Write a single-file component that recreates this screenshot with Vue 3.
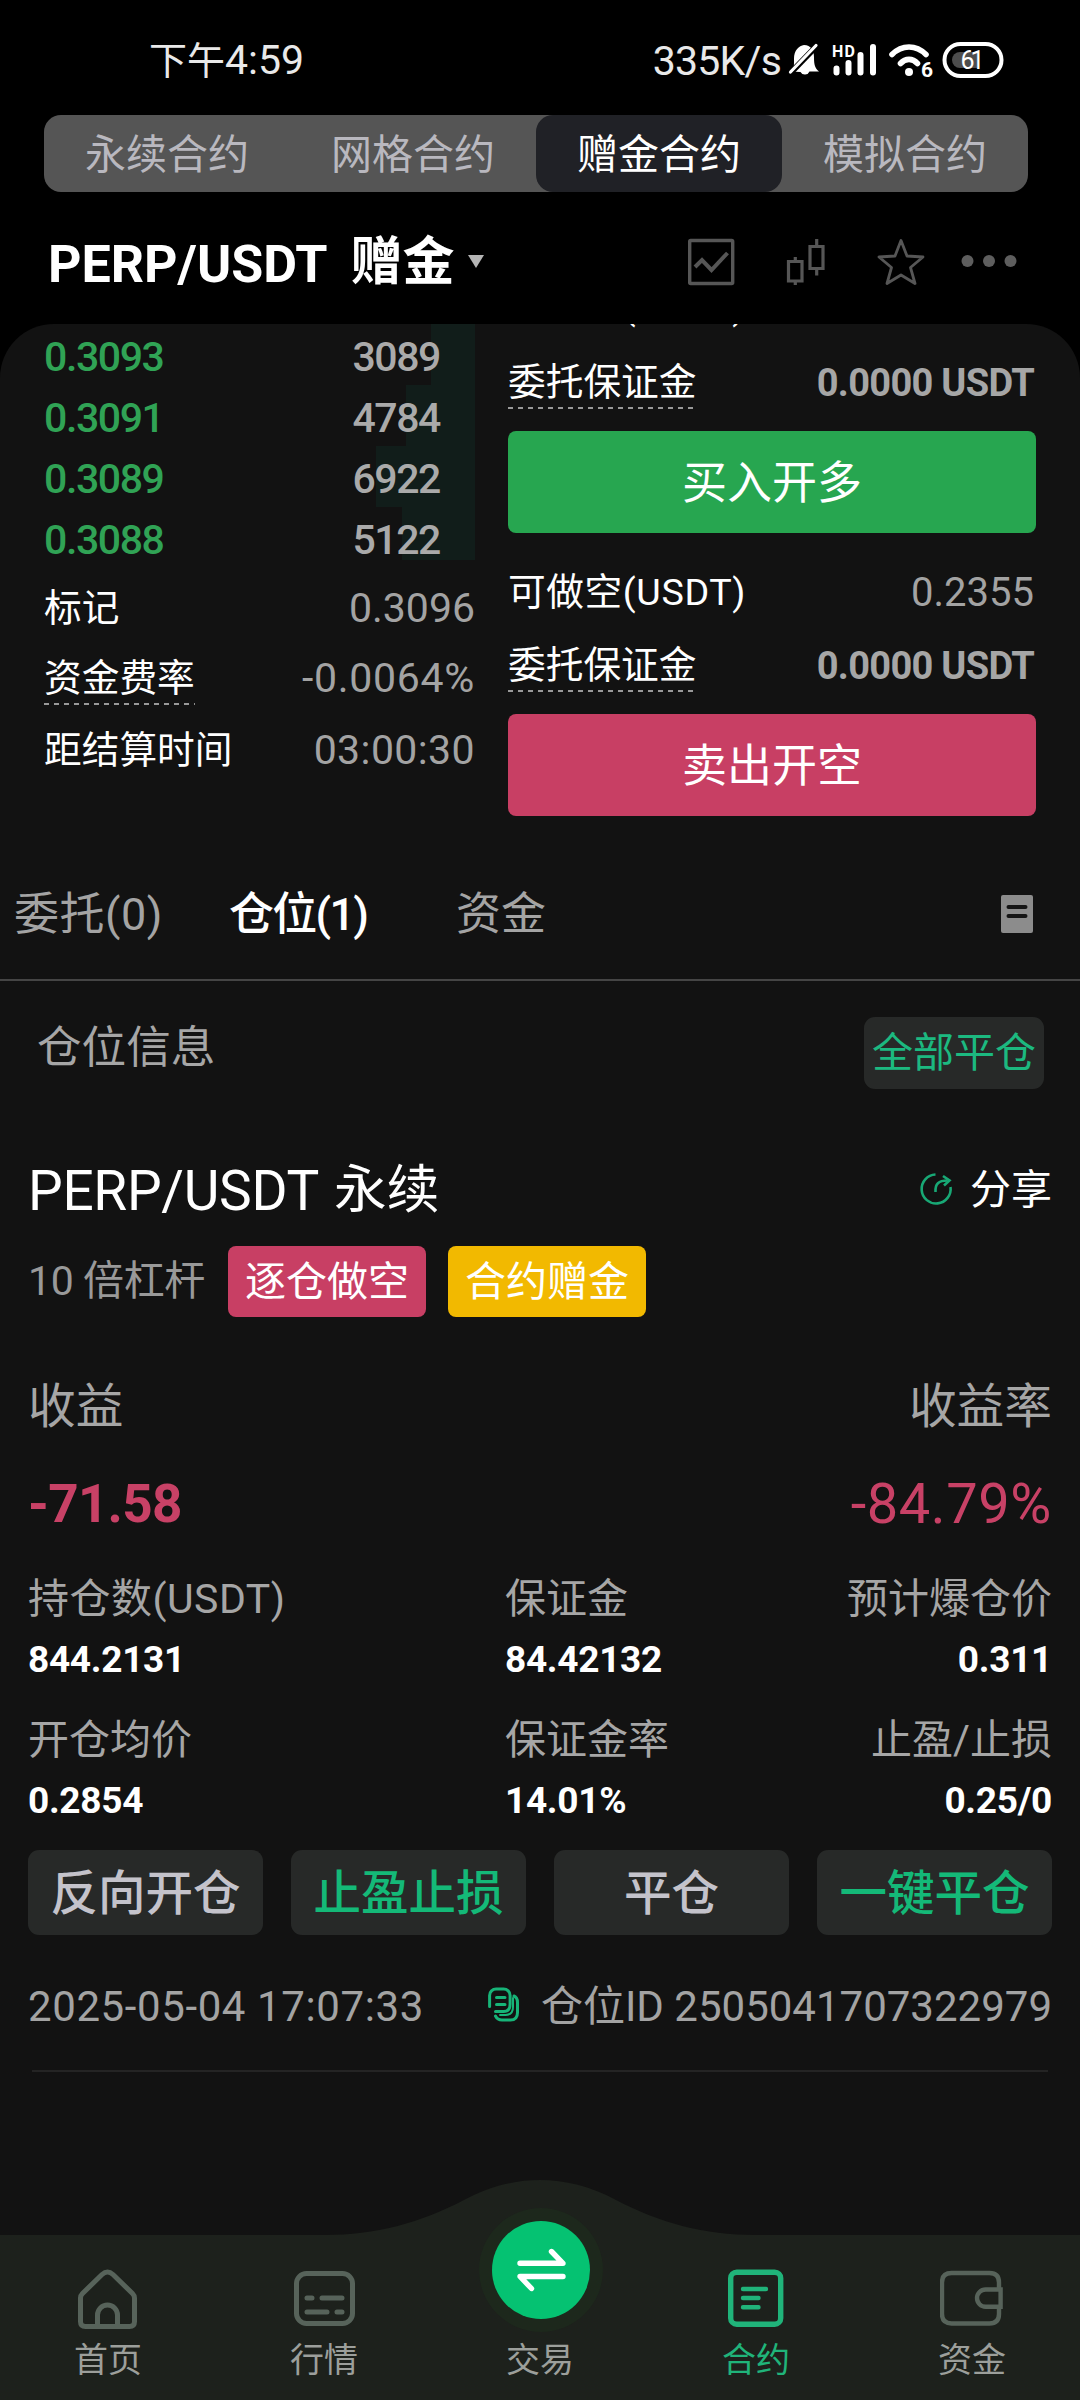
<script setup>
const modes = ['永续合约', '网格合约', '赠金合约', '模拟合约']
const activeMode = '赠金合约'

const bids = [
  { price: '0.3093', qty: '3089', depth: 44 },
  { price: '0.3091', qty: '4784', depth: 69 },
  { price: '0.3089', qty: '6922', depth: 99 },
  { price: '0.3088', qty: '5122', depth: 73 },
]

const orders = [
  { label: '可做多(USDT)', available: '0.2355', margin: '0.0000 USDT', action: '买入开多', side: 'buy' },
  { label: '可做空(USDT)', available: '0.2355', margin: '0.0000 USDT', action: '卖出开空', side: 'sell' },
]

const stats = [
  [
    { label: '持仓数(USDT)', value: '844.2131' },
    { label: '保证金', value: '84.42132' },
    { label: '预计爆仓价', value: '0.311' },
  ],
  [
    { label: '开仓均价', value: '0.2854' },
    { label: '保证金率', value: '14.01%' },
    { label: '止盈/止损', value: '0.25/0' },
  ],
]

const actions = [
  { text: '反向开仓', green: false },
  { text: '止盈止损', green: true },
  { text: '平仓', green: false },
  { text: '一键平仓', green: true },
]
</script>

<template>
  <div class="screen">
    <div class="status">
      <span class="time">下午<b>4:59</b></span>
      <span class="speed">335K/s</span>
      <svg class="sys" width="218" height="40" viewBox="787 40 218 40">
        <path fill="#fff" d="M791 71.500c3.500-3 3-7 3-13 0-8 5-13 10-13.500 7 .5 10 5 10 12 0 8 1 11 5 14.500h-9.500a5 5 0 0 1-9 .5z" />
        <path d="M820 42.500L789.500 74" stroke="#000" stroke-width="6" />
        <path d="M816 45.500L790.500 72" stroke="#fff" stroke-width="3.200" stroke-linecap="round" />
        <text x="832" y="56.500" font-size="16" font-weight="700" fill="#fff" textLength="23">HD</text>
        <g stroke="#fff" stroke-width="6" stroke-linecap="round">
          <path d="M836.500 68.500v4M848.500 63v9.500M860.500 55v17.500M873 47v25.500" />
        </g>
        <g fill="none" stroke="#fff" stroke-width="5.600" stroke-linecap="round">
          <path d="M892 54.500c10-10 24-10 34 0M900.500 63.500c5-5.500 12-5.500 17 0" />
        </g>
        <circle cx="909" cy="72" r="4" fill="#fff" />
        <text x="921" y="76.500" font-size="21" font-weight="700" fill="#fff">6</text>
        <rect x="944.500" y="44" width="57" height="32" rx="16" fill="none" stroke="#fff" stroke-width="4" />
        <path d="M977 52v16h-17a8 8 0 0 1 0-16z" fill="#4d4d4d" />
        <text x="960.500" y="69" font-size="25" font-weight="400" fill="#fff" textLength="24">61</text>
      </svg>
    </div>

    <div class="modes">
      <div v-for="m in modes" :key="m" class="mode" :class="{ on: m === activeMode }">{{ m }}</div>
    </div>

    <header class="head">
      <span class="pair">PERP/USDT</span>
      <span class="kind">赠金</span>
      <i class="caret"></i>
      <svg class="tools" width="340" height="50" viewBox="686 237 340 50" fill="none" stroke="#565656" stroke-width="3.400">
        <rect x="689.700" y="240.500" width="43" height="43" rx="1" />
        <path d="M695 267l7-7 9.500 10 16-17" stroke-width="4" />
        <path d="M788.500 261.500h13.500v19.500h-13.500zM795.300 257v4M795.300 281v4M810 246.500h13v22h-13zM816.700 239v7M816.700 269v6.500" stroke-width="3.200" />
        <path stroke-width="2.800" stroke-linejoin="round" d="M901 240.500l6 15.500 16 1-12.500 10.500 4.500 16-14-8.500-14 8.500 4.500-16L879 257l16-1z" />
        <g fill="#5e5e5e" stroke="none">
          <circle cx="967.500" cy="261" r="6" /><circle cx="989" cy="261" r="6" /><circle cx="1010.500" cy="261" r="6" />
        </g>
      </svg>
    </header>

    <main class="panel">
      <section class="trade">
        <div class="book">
          <div v-for="b in bids" :key="b.price" class="bid">
            <i class="depth" :style="{ width: b.depth + 'px' }"></i>
            <span class="price">{{ b.price }}</span>
            <span class="qty">{{ b.qty }}</span>
          </div>
          <div class="info mark"><span>标记</span><em>0.3096</em></div>
          <div class="info rate"><span class="dash">资金费率</span><em>-0.0064%</em></div>
          <div class="info settle"><span>距结算时间</span><em>03:00:30</em></div>
        </div>
        <div class="order">
          <div v-for="o in orders" :key="o.side" class="group">
            <div class="line avail"><span>{{ o.label }}</span><em>{{ o.available }}</em></div>
            <div class="line margin"><span class="dash">委托保证金</span><strong>{{ o.margin }}</strong></div>
            <div class="submit" :class="o.side">{{ o.action }}</div>
          </div>
        </div>
      </section>

      <nav class="tabs">
        <span class="t1">委托(0)</span>
        <span class="t2">仓位(1)</span>
        <span class="t3">资金</span>
        <svg width="32" height="38" viewBox="0 0 32 38">
          <rect width="32" height="38" rx="2" fill="#8c8c8c" />
          <path d="M7.500 12h17M7.500 21h17" stroke="#151515" stroke-width="4" stroke-linecap="round" />
        </svg>
      </nav>

      <div class="section-head">
        <span>仓位信息</span>
        <div class="close-all">全部平仓</div>
      </div>

      <section class="position">
        <div class="title">
          <span class="sym">PERP/USDT</span>
          <span class="perp">永续</span>
          <svg width="34" height="34" viewBox="0 0 34 34" fill="none" stroke="#18a875" stroke-width="2.600">
            <path d="M16.500 2.500A14.500 14.500 0 1 0 31.500 15" />
            <path d="M16.500 20c-.5-8 3-11.500 12-11.500" />
            <path d="M24 4l6.500 4.500-5.500 5" />
          </svg>
          <span class="share">分享</span>
        </div>
        <div class="badges">
          <span class="lever">10 倍杠杆</span>
          <span class="badge short">逐仓做空</span>
          <span class="badge bonus">合约赠金</span>
        </div>
        <div class="pnl-label"><span>收益</span><span>收益率</span></div>
        <div class="pnl"><b>-71.58</b><span>-84.79%</span></div>
        <div v-for="(row, i) in stats" :key="i" class="stats">
          <div v-for="s in row" :key="s.label" class="stat">
            <div class="k">{{ s.label }}</div>
            <div class="v">{{ s.value }}</div>
          </div>
        </div>
        <div class="actions">
          <div v-for="a in actions" :key="a.text" class="act" :class="{ green: a.green }">{{ a.text }}</div>
        </div>
        <div class="meta">
          <span class="date">2025-05-04 17:07:33</span>
          <svg width="32" height="36" viewBox="0 0 32 36" fill="none" stroke="#17b478" stroke-width="3" stroke-linecap="round">
            <path d="M1.600 19.500V8.500a6.500 6.500 0 0 1 6.500-6.500h7.500a6.500 6.500 0 0 1 6.500 6.500v8.500q0 7.500-6.500 7.500H7.500" />
            <path d="M8.500 10.500h8.500M8.500 17.500h8.500" />
            <path d="M26 9q3.500 1.500 3.500 6.500v10q0 7.500-7 7.500H14q-4.500 0-6.500-4" />
            <path d="M25 11v9q0 8-7.500 8H12" stroke-width="2" />
          </svg>
          <span class="pid">仓位ID 2505041707322979</span>
        </div>
        <div class="rule"></div>
      </section>

      <footer class="bottom">
        <svg class="hill" width="1080" height="220" viewBox="0 0 1080 220">
          <path d="M0 55H325C375 55 420 43 464 20C490 6 515 0 540 0C565 0 590 6 616 20C660 43 705 55 755 55H1080V220H0Z" fill="#1d211c" />
          <circle cx="541" cy="90" r="62" fill="#1d281c" />
        </svg>
        <div class="item">
          <svg width="64" height="64" viewBox="76 2268 64 64" fill="none" stroke="#57635a" stroke-width="5">
            <path d="M80.500 2298q0-2.500 2-4.500l19.500-19q5.500-5 11 0l19.500 19q2 2 2 4.500v23.500q0 5-5 5h-44q-5 0-5-5z" />
            <path d="M97.500 2326v-11a10 10 0 0 1 20 0v11" />
          </svg>
          <span>首页</span>
        </div>
        <div class="item">
          <svg width="64" height="64" viewBox="292 2268 64 64" fill="none" stroke="#57635a" stroke-width="5">
            <rect x="296.500" y="2273.500" width="56" height="50" rx="10" />
            <path d="M307 2298h5M322 2298h20M307 2312h20M337 2312h5" stroke-linecap="round" />
          </svg>
          <span>行情</span>
        </div>
        <div class="item">
          <svg class="swap" width="98" height="98" viewBox="490.500 2221 98 98" overflow="visible">
            <circle cx="540.500" cy="2270" r="49" fill="#05c272" />
            <path d="M519.500 2263.300h43L551 2251.500M562.500 2276.500h-43L531 2288.500" fill="none" stroke="#fff" stroke-width="5.400" stroke-linecap="round" stroke-linejoin="round" />
          </svg>
          <span>交易</span>
        </div>
        <div class="item on">
          <svg width="64" height="64" viewBox="724 2268 64 64" fill="none" stroke="#20b47a" stroke-width="5.400">
            <rect x="730.700" y="2272.200" width="50" height="52" rx="6" />
            <path d="M743 2289h23M743 2298h15.500M743 2307.300h15.500" stroke-width="4.400" stroke-linecap="round" />
          </svg>
          <span>合约</span>
        </div>
        <div class="item">
          <svg width="64" height="64" viewBox="940 2268 64 64" fill="none" stroke="#57635a" stroke-width="4.400">
            <path d="M999 2289.500v-7q0-9.500-9.500-9.500h-38q-9.500 0-9.500 9.500v31.500q0 9.500 9.500 9.500h38q9.500 0 9.500-9.500v-7" />
            <path d="M1000.600 2289.500h-15a8.600 8.600 0 0 0 0 17.200h15z" />
          </svg>
          <span>资金</span>
        </div>
      </footer>
    </main>
  </div>
</template>

<style>
body {
  background: #000;
}
</style>

<style scoped>
.screen {
  width: 1080px;
  height: 2400px;
  background: #000;
  color: #fff;
  display: flex;
  flex-direction: column;
  overflow: hidden;
  font-family: Roboto, 'Noto Sans CJK SC', sans-serif;
  white-space: nowrap;
}
em {
  font-style: normal;
}
.status {
  height: 115px;
  flex: none;
  box-sizing: border-box;
  padding: 0 75px 0 149px;
  display: flex;
  align-items: center;
  color: #e9e9e9;
}
.time {
  font-size: 38px;
  margin-right: auto;
  line-height: 50px;
  padding-top: 6px;
}
.time b {
  font-size: 41px;
  font-weight: 400;
}
.speed {
  font-size: 41px;
  letter-spacing: -0.8px;
  padding-top: 6px;
  margin-right: 6px;
}
.sys {
  padding-top: 5px;
}
.modes {
  flex: none;
  display: flex;
  margin: 0 52px 0 44px;
  height: 77px;
  background: #555;
  border-radius: 17px;
}
.mode {
  flex: 1;
  text-align: center;
  font-size: 41px;
  line-height: 80px;
  color: #b9b8bf;
}
.mode.on {
  background: #202126;
  color: #fff;
  border-radius: 17px;
}
.head {
  flex: none;
  height: 132px;
  box-sizing: border-box;
  padding: 6px 54px 0 48px;
  display: flex;
  align-items: center;
  font-weight: 700;
}
.pair {
  font-size: 52px;
  padding-top: 7px;
}
.kind {
  font-size: 52px;
  line-height: 60px;
  margin-left: 23px;
  padding-top: 4px;
}
.caret {
  margin-left: 13px;
  border: 8px solid transparent;
  border-top: 13px solid #b5b5b5;
  border-bottom: 0;
}
.tools {
  margin-left: auto;
  padding-top: 1px;
}
.panel {
  flex: 1;
  background: #121212;
  border-radius: 54px 54px 0 0;
  overflow: hidden;
  display: flex;
  flex-direction: column;
}
.trade {
  height: 492px;
  display: flex;
  justify-content: space-between;
  padding: 0 44px;
}
.book {
  width: 431px;
}
.bid {
  position: relative;
  box-sizing: border-box;
  height: 61px;
  padding: 5px 35px 0 0;
  display: flex;
  justify-content: space-between;
  font-size: 41px;
  font-weight: 500;
  line-height: 56px;
  letter-spacing: -1.400px;
}
.bid:nth-child(4) {
  height: 53px;
}
.depth {
  position: absolute;
  right: 0;
  top: 0;
  bottom: 0;
  background: #111d1a;
}
.price {
  color: #30a355;
}
.qty {
  position: relative;
  color: #aaa;
}
.info {
  display: flex;
  justify-content: space-between;
  font-size: 37.700px;
  align-items: flex-start;
}
.info em {
  font-size: 41px;
  color: #a3a3a3;
}
.mark {
  margin-top: 8px;
  line-height: 80px;
}
.rate {
  padding-top: 2px;
  line-height: 57px;
  height: 58px;
}
.rate em {
  letter-spacing: 0.7px;
}
.settle {
  line-height: 84px;
}
.settle em {
  letter-spacing: 0.4px;
}
.dash {
  height: 55px;
  background: repeating-linear-gradient(90deg, #999 0 5px, transparent 5px 10px) bottom / 100% 2px no-repeat;
}
.order {
  width: 528px;
  margin: -45px 0 0 0;
}
.group {
  height: 283px;
}
.line {
  display: flex;
  justify-content: space-between;
  font-size: 37.700px;
  padding-right: 2px;
}
.avail {
  height: 60px;
  line-height: 61px;
}
/* the first row is scrolled almost completely under the header */
.group:first-child .avail {
  line-height: 54px;
}
.avail span {
  letter-spacing: 0.6px;
}
.avail em {
  font-size: 40px;
  color: #a3a3a3;
}
.margin {
  line-height: 57px;
  height: 55px;
  margin: 15px 0 22px;
}
.margin strong {
  font-size: 38px;
  letter-spacing: -0.7px;
  color: #a6a6a6;
  line-height: 59px;
}
.submit {
  height: 102px;
  line-height: 105px;
  border-radius: 8px;
  text-align: center;
  font-size: 45px;
}
.buy {
  background: #27a650;
}
.sell {
  background: #c83f64;
}
.tabs {
  flex: none;
  margin-top: 32px;
  height: 133px;
  box-sizing: border-box;
  padding: 0 47px 0 14px;
  border-bottom: 2px solid #454545;
  display: flex;
  align-items: center;
  font-size: 45px;
  line-height: 60px;
  color: #a4a4a4;
}
.tabs span {
  padding-top: 3px;
}
.t1 {
  width: 215px;
  letter-spacing: 0.5px;
}
.t2 {
  width: 227px;
  color: #fff;
  font-weight: 500;
  letter-spacing: -1.700px;
}
.tabs svg {
  margin-left: auto;
}
.section-head {
  margin-top: 36px;
  height: 72px;
  flex: none;
  padding: 0 36px 0 37px;
  display: flex;
  justify-content: space-between;
  font-size: 44.600px;
  line-height: 63px;
  color: #a6a6a6;
}
.close-all {
  width: 180px;
  height: 72px;
  line-height: 73px;
  background: #272928;
  border-radius: 11px;
  font-size: 41px;
  text-align: center;
  color: #1cb980;
}
.position {
  padding: 0 28px;
  margin-top: 60px;
}
.title {
  display: flex;
  align-items: center;
  height: 80px;
}
.sym {
  font-size: 55px;
  letter-spacing: -0.3px;
  padding-top: 3px;
}
.perp {
  font-size: 52.700px;
  line-height: 76px;
  margin-left: 15px;
  padding-top: 2px;
}
.title svg {
  margin-left: auto;
}
.share {
  font-size: 41px;
  line-height: 76px;
  margin-left: 17px;
  padding-top: 2px;
}
.badges {
  margin-top: 17px;
  height: 71px;
  display: flex;
  align-items: center;
  font-size: 41px;
  line-height: 73px;
}
.lever {
  color: #999;
  width: 200px;
  letter-spacing: -0.4px;
}
.badge {
  width: 198px;
  height: 71px;
  line-height: 73px;
  border-radius: 8px;
  text-align: center;
  margin-right: 22px;
}
.short {
  background: #c83f64;
}
.bonus {
  background: #f2b900;
}
.pnl-label {
  margin-top: 54px;
  height: 70px;
  display: flex;
  justify-content: space-between;
  font-size: 47.700px;
  line-height: 73px;
  color: #a6a6a6;
}
.pnl {
  height: 125px;
  line-height: 126px;
  display: flex;
  justify-content: space-between;
  color: #c84166;
}
.pnl b {
  font-size: 53px;
  letter-spacing: -0.7px;
}
.pnl span {
  font-size: 56px;
  letter-spacing: 0.6px;
}
.stats {
  display: grid;
  grid-template-columns: 477px 1fr auto;
}
.stats + .stats {
  margin-top: 17px;
}
.stat:last-child {
  text-align: right;
}
.k {
  font-size: 41px;
  height: 64px;
  line-height: 67px;
  color: #a6a6a6;
}
.stats:not(.stats + .stats) .stat:first-child .k {
  letter-spacing: 0.5px;
}
.v {
  font-size: 37px;
  font-weight: 700;
  letter-spacing: -0.3px;
  line-height: 60px;
  height: 60px;
}
.actions {
  margin-top: 19px;
  display: grid;
  grid-template-columns: repeat(4, 235px);
  justify-content: space-between;
}
.act {
  height: 85px;
  line-height: 88px;
  border-radius: 11px;
  background: #272928;
  text-align: center;
  font-size: 47.500px;
  font-weight: 500;
  color: #c4c3cb;
}
.act.green {
  color: #14b978;
}
.meta {
  margin-top: 41px;
  height: 61px;
  line-height: 62px;
  display: flex;
  align-items: center;
  font-size: 42px;
  color: #a3a3a3;
}
.date {
  letter-spacing: 0.600px;
}
.meta svg {
  margin-left: auto;
  margin-right: 21px;
  margin-bottom: 3px;
}
.rule {
  margin: 33px 4px 0;
  height: 2px;
  background: #242424;
}
.bottom {
  position: relative;
  flex: none;
  margin-top: auto;
  height: 220px;
  display: flex;
}
.hill {
  position: absolute;
  left: 0;
  top: 0;
}
.item {
  position: relative;
  flex: 1;
  height: 220px;
  display: flex;
  flex-direction: column;
  align-items: center;
  justify-content: flex-end;
  font-size: 34px;
  color: #9c9f9b;
}
.item span {
  line-height: 50px;
  margin: 3px 0 15px;
}
.item .swap {
  margin-bottom: 13px;
}
.item.on {
  color: #20b47a;
}
</style>
